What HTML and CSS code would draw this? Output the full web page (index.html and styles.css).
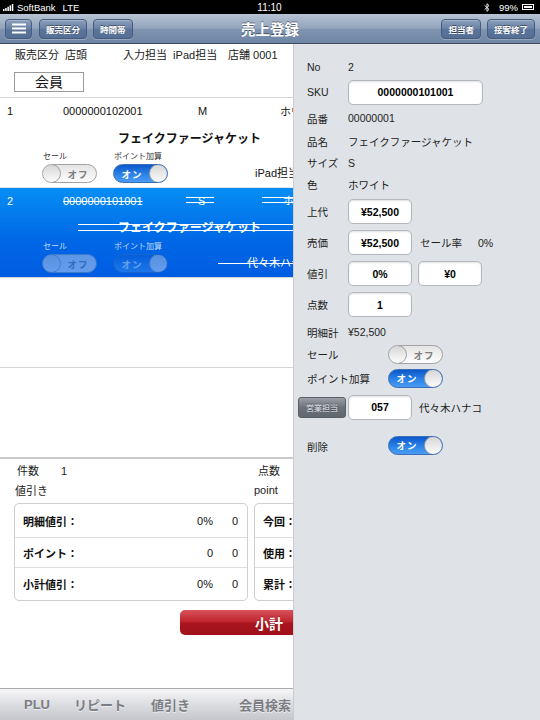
FILE: index.html
```html
<!DOCTYPE html>
<html lang="ja">
<head>
<meta charset="utf-8">
<title>売上登録</title>
<link rel="stylesheet" href="styles.css">
</head>
<body>
<div class="screen">
  <div class="statusbar">
    <div class="sb-left">
      <svg class="signal" width="11" height="7" viewBox="0 0 11 7"><rect x="0" y="5" width="1.5" height="2"/><rect x="2.2" y="4" width="1.5" height="3"/><rect x="4.4" y="2.8" width="1.5" height="4.2"/><rect x="6.6" y="1.4" width="1.5" height="5.6"/><rect x="8.8" y="0" width="1.5" height="7"/></svg>
      <span>SoftBank</span><span class="lte">LTE</span>
    </div>
    <div class="sb-time">11:10</div>
    <div class="sb-right">
      <svg class="bt" width="6" height="9" viewBox="0 0 6 9"><path d="M0.6 2.4 L5 6.4 L3 8.3 V0.7 L5 2.6 L0.6 6.6" fill="none" stroke="#fff" stroke-width="0.9"/></svg>
      <span>99%</span>
      <span class="battery"><span class="battery-fill"></span></span>
    </div>
  </div>

  <div class="navbar">
    <div class="nav-left">
      <div class="nbtn menu">
        <svg width="14" height="11" viewBox="0 0 14 11"><rect x="0" y="0.5" width="14" height="2" fill="#fff"/><rect x="0" y="4.5" width="14" height="2" fill="#fff"/><rect x="0" y="8.5" width="14" height="2" fill="#fff"/></svg>
      </div>
      <div class="nbtn">販売区分</div>
      <div class="nbtn">時間帯</div>
    </div>
    <div class="nav-title">売上登録</div>
    <div class="nav-right">
      <div class="nbtn">担当者</div>
      <div class="nbtn">接客終了</div>
    </div>
  </div>

  <div class="main">
    <div class="left">
      <div class="left-inner">
        <div class="info">
          <span class="info-a">販売区分&nbsp;&nbsp;店頭</span>
          <span class="info-b">入力担当&nbsp;&nbsp;iPad担当</span>
          <span class="info-c">店舗&nbsp;0001</span>
        </div>
        <div class="member">会員</div>

        <div class="row">
          <div class="r-line1">
            <span class="c-no">1</span><span class="c-sku">0000000102001</span><span class="c-size">M</span><span class="c-color">ホワイト</span>
          </div>
          <div class="r-name"><span class="name-text">フェイクファージャケット</span></div>
          <div class="r-line3">
            <div class="tg-group g1">
              <div class="tg-label">セール</div>
              <span class="toggle off"><span class="knob"></span><span class="tg-text">オフ</span></span>
            </div>
            <div class="tg-group g2">
              <div class="tg-label">ポイント加算</div>
              <span class="toggle on"><span class="tg-text">オン</span><span class="knob"></span></span>
            </div>
            <div class="r-staff">iPad担当</div>
          </div>
        </div>

        <div class="row sel">
          <div class="r-line1">
            <span class="c-no">2</span><span class="c-sku"><span class="strike1">0000000101001</span></span><span class="c-size"><span class="x2 sx">S</span></span><span class="c-color"><span class="x2 cx">ホワイト</span></span>
          </div>
          <div class="r-name"><span class="x2 nx">フェイクファージャケット</span></div>
          <div class="r-line3">
            <div class="tg-group g1">
              <div class="tg-label">セール</div>
              <span class="toggle off dim"><span class="knob"></span><span class="tg-text">オフ</span></span>
            </div>
            <div class="tg-group g2">
              <div class="tg-label">ポイント加算</div>
              <span class="toggle on dim"><span class="tg-text">オン</span><span class="knob"></span></span>
            </div>
            <div class="r-staff"><span class="strike-wide">代々木ハナコ</span></div>
          </div>
        </div>

        <div class="row empty"></div>
        <div class="row empty"></div>

        <div class="summary">
          <div class="sum-line">
            <span class="sum-a"><span class="sum-k">件数</span>1</span>
            <span class="sum-b">点数</span>
          </div>
          <div class="sum-line">
            <span class="sum-a">値引き</span>
            <span class="sum-b">point</span>
          </div>
          <div class="boxes">
            <div class="box">
              <div class="box-row r1"><span class="b-label">明細値引：</span><span class="b-pct">0%</span><span class="b-val">0</span></div>
              <div class="box-row r2"><span class="b-label">ポイント：</span><span class="b-pct">0</span><span class="b-val">0</span></div>
              <div class="box-row r3"><span class="b-label">小計値引：</span><span class="b-pct">0%</span><span class="b-val">0</span></div>
            </div>
            <div class="box">
              <div class="box-row r1"><span class="b-label">今回：</span></div>
              <div class="box-row r2"><span class="b-label">使用：</span></div>
              <div class="box-row r3"><span class="b-label">累計：</span></div>
            </div>
          </div>
          <div class="subtotal">小計</div>
        </div>
      </div>
      <div class="tabbar">
        <span class="tab t1">PLU</span>
        <span class="tab t2">リピート</span>
        <span class="tab t3">値引き</span>
        <span class="tab t4">会員検索</span>
      </div>
    </div>

    <div class="detail">
      <div class="d-row h22"><span class="d-label">No</span><span>2</span></div>
      <div class="d-row h28"><span class="d-label">SKU</span><span class="field wide">0000000101001</span></div>
      <div class="d-row h24"><span class="d-label">品番</span><span>00000001</span></div>
      <div class="d-row h22"><span class="d-label">品名</span><span>フェイクファージャケット</span></div>
      <div class="d-row h21"><span class="d-label">サイズ</span><span>S</span></div>
      <div class="d-row h23"><span class="d-label">色</span><span>ホワイト</span></div>
      <div class="d-row h31"><span class="d-label">上代</span><span class="field">¥52,500</span></div>
      <div class="d-row h31"><span class="d-label">売価</span><span class="field">¥52,500</span><span class="rate-label">セール率</span><span>0%</span></div>
      <div class="d-row h31"><span class="d-label">値引</span><span class="field">0%</span><span class="field second">¥0</span></div>
      <div class="d-row h31"><span class="d-label">点数</span><span class="field">1</span></div>
      <div class="d-row h24"><span class="d-label">明細計</span><span>¥52,500</span></div>
      <div class="d-row h21"><span class="d-label wide-label">セール</span><span class="toggle off"><span class="knob"></span><span class="tg-text">オフ</span></span></div>
      <div class="d-row h26"><span class="d-label wide-label">ポイント加算</span><span class="toggle on"><span class="tg-text">オン</span><span class="knob"></span></span></div>
      <div class="d-row h32 staff-row"><span class="staff-btn">営業担当</span><span class="field">057</span><span class="staff-name">代々木ハナコ</span></div>
      <div class="d-row h44"><span class="d-label wide-label low">削除</span><span class="toggle on"><span class="tg-text">オン</span><span class="knob"></span></span></div>
    </div>
  </div>
</div>
</body>
</html>
```

FILE: styles.css
```css
* { box-sizing: border-box; }
html, body { margin: 0; padding: 0; }
body {
  width: 540px;
  height: 720px;
  overflow: hidden;
  font-family: "Liberation Sans", "Noto Sans CJK JP", sans-serif;
  color: #111;
  background: #fff;
}
.screen { width: 540px; height: 720px; display: flex; flex-direction: column; }

/* status bar */
.statusbar {
  height: 14px;
  flex: none;
  background: #000;
  color: #fff;
  display: grid;
  grid-template-columns: 1fr auto 1fr;
  align-items: center;
  font-size: 9.5px;
  padding: 0 4px 0 3px;
}
.sb-left { display: flex; align-items: center; gap: 2px; }
.signal { fill: #fff; margin-right: 1px; }
.lte { margin-left: 5px; }
.sb-time { font-size: 10px; }
.sb-right { display: flex; justify-content: flex-end; align-items: center; gap: 4px; }
.bt { margin-right: 5px; }
.battery {
  width: 12px; height: 6px;
  border: 1px solid #fff;
  padding: 1px;
  display: flex;
  margin-right: 2px;
}
.battery-fill { flex: 1; background: #fff; }

/* nav bar */
.navbar {
  height: 30px;
  flex: none;
  background: linear-gradient(#b7c3d3, #91a3bc 50%, #7f94b0 52%, #6e85a4);
  border-bottom: 1px solid #3d4a5c;
  display: grid;
  grid-template-columns: 1fr auto 1fr;
  align-items: center;
  padding: 0 5px;
}
.nav-left { display: flex; gap: 6px; align-items: center; }
.nav-right { display: flex; gap: 6px; justify-content: flex-end; align-items: center; }
.nbtn {
  height: 20px;
  padding: 0 6px;
  border: 1px solid #465b7e;
  border-radius: 4px;
  background: linear-gradient(#8c9fbc, #6780a4 50%, #5a749a 52%, #546e95);
  color: #fff;
  font-size: 8.5px;
  font-weight: bold;
  display: flex;
  align-items: center;
  justify-content: center;
  text-shadow: 0 -1px 0 rgba(0,0,0,.45);
  box-shadow: 0 1px 0 rgba(255,255,255,.25), inset 0 1px 0 rgba(255,255,255,.2);
}
.nbtn.menu { width: 27px; padding: 0; margin-right: 1px; }
.nav-title {
  color: #fff;
  font-size: 14.5px;
  font-weight: bold;
  text-shadow: 0 -1px 0 rgba(0,0,0,.45);
}

/* main */
.main { flex: 1; display: flex; min-height: 0; }
.left {
  width: 293px;
  flex: none;
  overflow: hidden;
  display: flex;
  flex-direction: column;
  background: #fff;
}
.left-inner { width: 380px; flex: 1; min-height: 0; }

.info {
  height: 20px;
  display: flex;
  align-items: center;
  font-size: 11px;
  padding-left: 15px;
  color: #222;
}
.info-a { width: 108px; }
.info-b { width: 105px; }
.member {
  margin: 8px 0 5px 14px;
  width: 70px;
  height: 20px;
  border: 1px solid #9a9a9a;
  font-size: 14px;
  line-height: 18px;
  text-align: center;
}

.row { height: 90px; border-top: 1px solid #d4d4d4; }
.r-line1 { height: 26px; display: flex; align-items: center; font-size: 11px; }
.c-no { width: 63px; padding-left: 7px; }
.c-sku { width: 135px; }
.c-size { width: 82px; }
.r-name { height: 27px; display: flex; align-items: center; padding-left: 118px; font-size: 12px; font-weight: bold; }
.r-line3 { display: flex; align-items: flex-end; padding-left: 42px; padding-top: 1px; }
.tg-group { display: flex; flex-direction: column; }
.g1 { width: 71px; }
.g2 { width: 142px; }
.tg-label { font-size: 8px; line-height: 10px; height: 10px; color: #333; margin-bottom: 2px; padding-left: 1px; }
.r-staff { font-size: 11px; height: 19px; line-height: 19px; }

/* toggle */
.toggle {
  width: 55px;
  height: 19px;
  border-radius: 10px;
  display: inline-flex;
  align-items: center;
  border: 1px solid #a3a3a3;
  font-size: 9.5px;
  font-weight: bold;
  flex: none;
  overflow: hidden;
}
.toggle.off { background: linear-gradient(#e4e4e4, #fdfdfd); color: #7d7d7d; }
.toggle.on { background: linear-gradient(#0c58cc, #2f86ea 60%, #4a9bf2); color: #fff; border-color: #3b6fb5; }
.knob {
  width: 19px;
  height: 19px;
  margin: -1px;
  border-radius: 50%;
  background: linear-gradient(#d6d6d6, #fcfcfc);
  border: 1px solid #a0a0a0;
  flex: none;
}
.tg-text { flex: 1; text-align: center; letter-spacing: 1px; }

/* selected row */
.row.sel {
  border-top-color: #e4e4e4;
  background: linear-gradient(#068ef4, #0067e6 60%, #005ce2);
  color: #fff;
}
.sel .tg-label { color: rgba(255,255,255,.75); }
.toggle.dim { opacity: .4; }
.strike1 { text-decoration: line-through; }
.x2 {
  display: inline-block;
  line-height: 14px;
  background-image: linear-gradient(#fff, #fff), linear-gradient(#fff, #fff);
  background-size: 100% 1px, 100% 1px;
  background-repeat: no-repeat;
  background-position: 0 3px, 0 8px;
}
.sx { margin-left: -12px; padding: 0 9px 0 12px; }
.cx { margin-left: -18px; padding-left: 21px; }
.nx { margin-left: -40px; padding: 1px 60px 1px 40px; background-position: 0 4px, 0 10px; }
.sel .r-staff { margin-left: -37px; }
.strike-wide {
  padding-left: 29px;
  background: linear-gradient(#fff, #fff) 0 50% / 100% 1px no-repeat;
}

/* summary */
.summary { border-top: 2px solid #c9c9c9; padding-left: 14px; }
.sum-line { display: flex; align-items: center; font-size: 11px; color: #222; }
.sum-line:first-child { height: 21px; }
.sum-line + .sum-line { height: 20px; }
.sum-a { width: 240px; padding-left: 1px; }
.sum-line:first-child .sum-a { padding-left: 3px; }
.sum-k { display: inline-block; width: 44px; }
.sum-line:first-child .sum-b { padding-left: 4px; }
.boxes { display: flex; gap: 6px; margin-top: 3px; }
.box {
  width: 234px;
  border: 1px solid #cfcfcf;
  border-radius: 5px;
  background: #fff;
  flex: none;
}
.box-row {
  display: flex;
  align-items: center;
  padding: 0 9px 0 8px;
  font-size: 11px;
}
.box-row + .box-row { border-top: 1px solid #dedede; }
.box-row.r1 { height: 33px; }
.box-row.r2 { height: 30px; }
.box-row.r3 { height: 33px; }
.b-label { flex: 1; font-weight: bold; }
.b-pct { text-align: right; }
.b-val { width: 25px; text-align: right; }
.subtotal {
  margin: 9px 0 0 166px;
  width: 178px;
  height: 25px;
  border-radius: 5px;
  background: linear-gradient(#d9525a, #c0262f 45%, #a8141d 55%, #a0121b);
  color: #fff;
  font-size: 14px;
  font-weight: bold;
  display: flex;
  align-items: center;
  justify-content: center;
  text-shadow: 0 -1px 0 rgba(0,0,0,.3);
}

/* tab bar */
.tabbar {
  height: 32px;
  flex: none;
  border-top: 1px solid #a9abb0;
  background: linear-gradient(#f6f6f8, #dcdde1 50%, #c4c6cc);
  display: flex;
  align-items: center;
  padding-left: 24px;
  white-space: nowrap;
}
.tab { font-size: 13px; font-weight: bold; color: #7b7d83; text-shadow: 0 1px 0 rgba(255,255,255,.6); }
.t2 { margin-left: 24px; }
.t3 { margin-left: 25px; }
.t4 { margin-left: 49px; }

/* detail panel */
.detail {
  flex: 1;
  background: #dfe2e7;
  border-left: 1px solid #c9ccd2;
  padding: 12px 0 0 13px;
  font-size: 10.5px;
  color: #222;
}
.d-row { display: flex; align-items: center; white-space: nowrap; }
.h21 { height: 21px; } .h22 { height: 22px; } .h23 { height: 23px; } .h24 { height: 24px; }
.h26 { height: 26px; } .h28 { height: 28px; } .h31 { height: 31px; } .h32 { height: 32px; } .h44 { height: 44px; }
.d-label { width: 41px; flex: none; }
.d-label.wide-label { width: 81px; }
.d-label.low { padding-top: 3px; }
.field {
  width: 64px;
  height: 25px;
  background: #fff;
  border: 1px solid #b3b7be;
  border-radius: 5px;
  display: flex;
  align-items: center;
  justify-content: center;
  font-weight: bold;
  font-size: 10.5px;
  color: #000;
  box-shadow: inset 0 1px 2px rgba(0,0,0,.12);
  flex: none;
}
.field.wide { width: 135px; }
.field.second { margin-left: 6px; }
.rate-label { margin-left: 8px; width: 58px; }
.staff-row { margin-left: -9px; }
.staff-btn {
  width: 48px;
  height: 21px;
  margin-right: 2px;
  border-radius: 3px;
  border: 1px solid #5a5f66;
  background: linear-gradient(#9ba0a8, #6c727a 50%, #60666e);
  color: #e4e6ea;
  font-size: 8px;
  display: flex;
  align-items: center;
  justify-content: center;
  text-shadow: 0 -1px 0 rgba(0,0,0,.4);
}
.staff-name { margin-left: 7px; }
```
